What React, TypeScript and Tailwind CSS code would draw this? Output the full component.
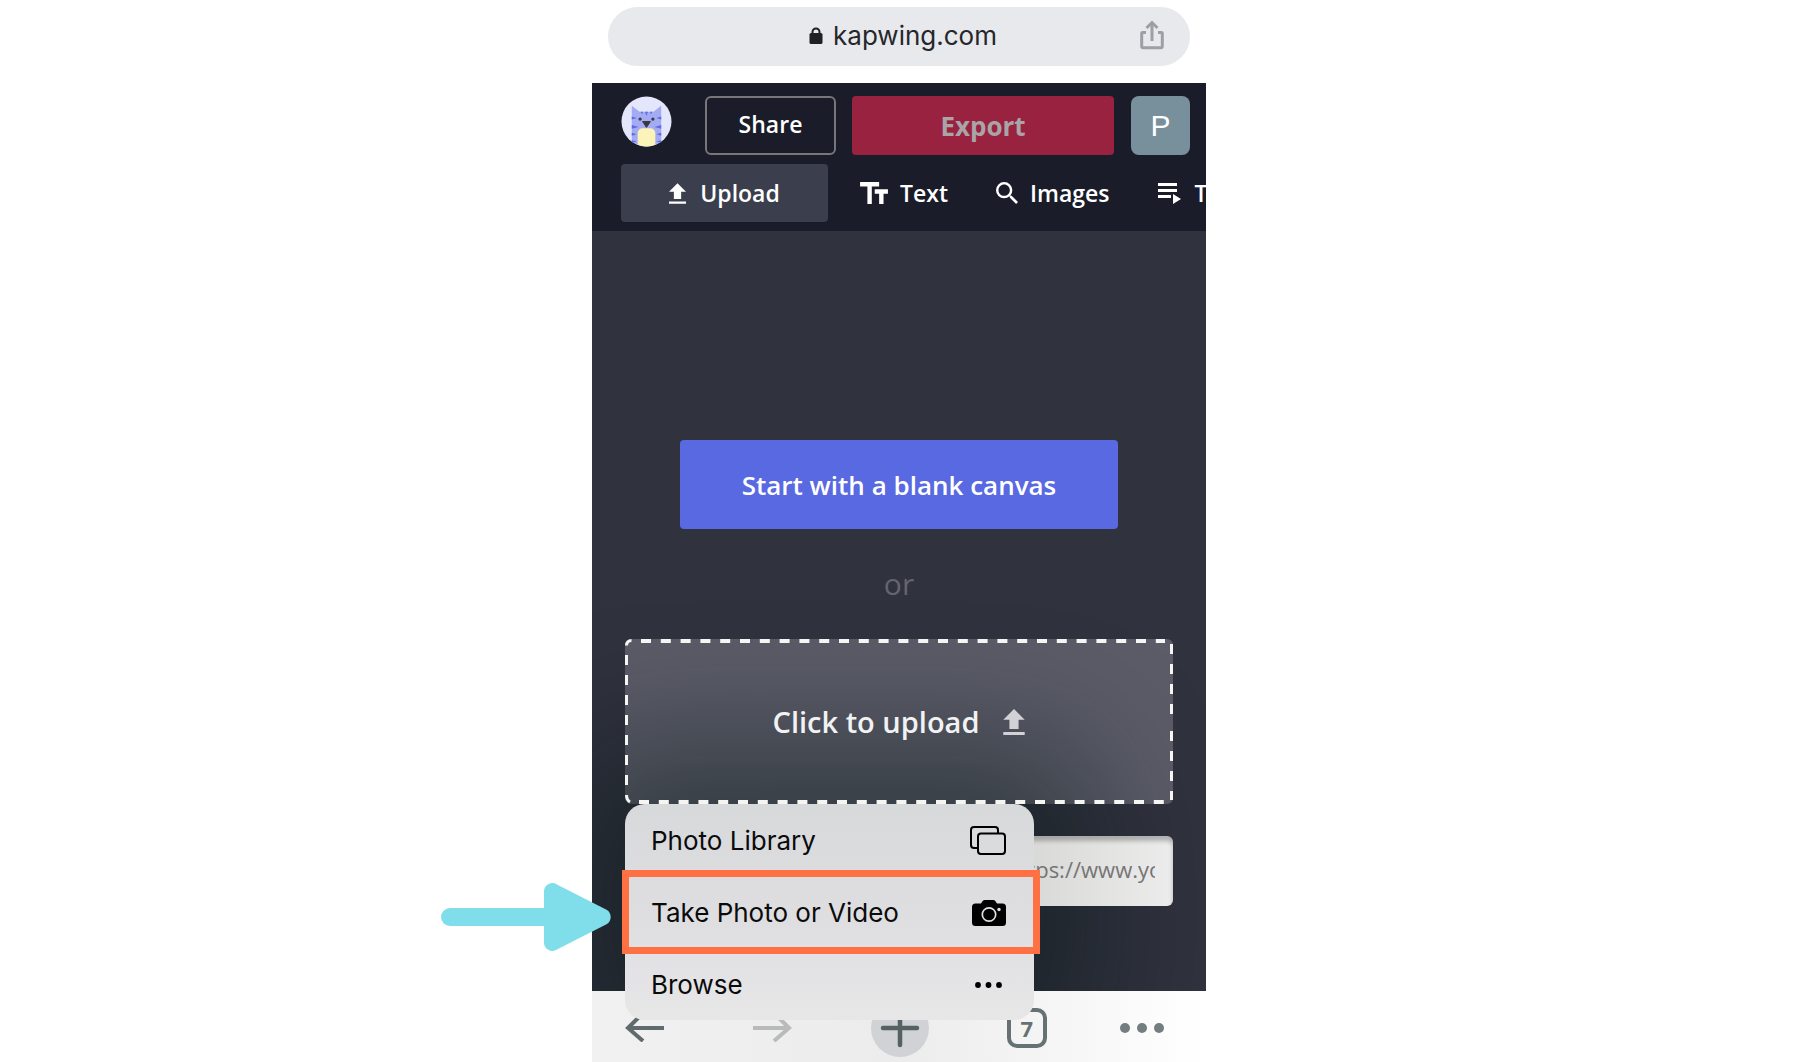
import React from "react";

function LockIcon() {
  return (
    <svg viewBox="0 0 14 18" className="h-[18px] w-3.5" aria-hidden="true">
      <path d="M3.500 8V5a3.500 3.500 0 0 1 7 0v3" fill="none" stroke="#202124" strokeWidth="2" />
      <rect x="0.500" y="6" width="13" height="11" rx="1.600" fill="#202124" />
    </svg>
  );
}

function ShareSheetIcon() {
  return (
    <svg viewBox="0 0 24 30" className="mb-1 h-[30px] w-6" fill="none" stroke="#9aa0a6" strokeWidth="3" aria-hidden="true">
      <path d="M6 12.500H2.500a.8.8 0 0 0-.8.8v13a1.500 1.500 0 0 0 1.500 1.500h17.600a1.500 1.500 0 0 0 1.500-1.500v-13a.8.8 0 0 0-.8-.8H18" />
      <path d="M12 21V3M6.500 8 12 2.500 17.500 8" />
    </svg>
  );
}

function CatAvatar() {
  return (
    <svg viewBox="0 0 52 52" className="size-[51px]" aria-hidden="true">
      <defs>
        <clipPath id="avatar-clip">
          <circle cx="26" cy="26" r="25.500" />
        </clipPath>
      </defs>
      <g clipPath="url(#avatar-clip)">
        <rect width="52" height="52" fill="#e4e6fc" />
        <path d="M11 52V10l8 6h14l8-6v42z" fill="#a3acf2" />
        <path
          d="M11 21l5 1.500-5 1.500zM11 29.500l7 2-7 2zM11 37.500l5 1.500-5 1.500zM11 45l5 1.500-5 1.500zM41 21l-5 1.500 5 1.500zM41 29.500l-7 2 7 2zM41 37.500l-5 1.500 5 1.500zM41 45l-5 1.500 5 1.500zM24.500 16h3L26 20.500zM20 16h2.500l-1 2.500zM29.500 16H32l-1.500 2.500z"
          fill="#5f6ae4"
        />
        <circle cx="19.500" cy="23.500" r="1.700" fill="#3b3b4a" />
        <circle cx="32.500" cy="23.500" r="1.700" fill="#3b3b4a" />
        <path d="M22 26h8l-4 6z" fill="#3b3840" stroke="#3b3840" strokeLinejoin="round" />
        <path d="M17 52V38a5 5 0 0 1 5-5h8a5 5 0 0 1 5 5v14z" fill="#fbf3b8" />
      </g>
    </svg>
  );
}

function UploadIcon({ className }: { className: string }) {
  return (
    <svg viewBox="5 3 14 17" className={className} fill="currentColor" aria-hidden="true">
      <path d="M5 20h14v-2H5zM5 10h4v6h6v-6h4l-7-7z" />
    </svg>
  );
}

function TextSizeIcon() {
  return (
    <svg viewBox="2.500 4 19 15" className="h-[22px] w-7" fill="currentColor" aria-hidden="true">
      <path d="M2.500 4v3h5v12h3V7h5V4zM21.500 9h-9v3h3v7h3v-7h3z" />
    </svg>
  );
}

function SearchIcon() {
  return (
    <svg viewBox="3 3 17.500 17.500" className="size-[22px]" fill="currentColor" aria-hidden="true">
      <path d="M15.500 14h-.79l-.28-.27A6.471 6.471 0 0 0 16 9.500 6.500 6.500 0 1 0 9.500 16c1.610 0 3.090-.59 4.230-1.570l.27.28v.79l5 4.990L20.490 19zm-6 0C7.010 14 5 11.990 5 9.500S7.010 5 9.500 5 14 7.010 14 9.500 11.990 14 9.500 14z" />
    </svg>
  );
}

function TimelineIcon() {
  return (
    <svg viewBox="0 0 23 22" className="h-[22px] w-[23px] shrink-0" fill="currentColor" aria-hidden="true">
      <path d="M0 1h19v3H0zM0 7h19v3H0zM0 13h13v3H0zM15 12l8 5-8 5z" />
    </svg>
  );
}

function LibraryIcon() {
  return (
    <svg viewBox="0 0 36 29" className="h-[29px] w-9" fill="none" stroke="#000" strokeWidth="2" aria-hidden="true">
      <path d="M7.500 22H4a3 3 0 0 1-3-3V4a3 3 0 0 1 3-3h21a3 3 0 0 1 3 3v3.500" />
      <rect x="8" y="7.500" width="27" height="20.500" rx="3" />
    </svg>
  );
}

function CameraIcon() {
  return (
    <svg viewBox="0 0 34 26" className="h-[26px] w-[34px]" aria-hidden="true">
      <path
        d="M3.500 3.500H9l1.500-2.200A3 3 0 0 1 13 0h8a3 3 0 0 1 2.500 1.300L25 3.500h5.500A3.500 3.500 0 0 1 34 7v15.500a3.500 3.500 0 0 1-3.500 3.500h-27A3.500 3.500 0 0 1 0 22.500V7a3.500 3.500 0 0 1 3.500-3.500z"
        fill="#000"
      />
      <circle cx="17" cy="14.500" r="6.700" fill="none" stroke="#e0e0e2" strokeWidth="1.700" />
      <circle cx="27" cy="9.500" r="1.700" fill="#e0e0e2" />
    </svg>
  );
}

function MoreIcon() {
  return (
    <svg viewBox="0 0 27 6" className="mr-1 h-1.5 w-[27px]" fill="#000" aria-hidden="true">
      <circle cx="3" cy="3" r="2.900" />
      <circle cx="13.500" cy="3" r="2.900" />
      <circle cx="24" cy="3" r="2.900" />
    </svg>
  );
}

function DashedOutline() {
  return (
    <svg className="absolute inset-0 z-10 h-full w-full" fill="none" stroke="#f5f5f3" strokeWidth="3" aria-hidden="true">
      <path d="M1.500 6.500C1.500 3.500 3.500 1.500 6.500 1.500" />
      <line x1="16" y1="2" x2="540" y2="2" strokeWidth="4" strokeDasharray="10 9.800" />
      <line x1="14" y1="163" x2="540" y2="163" strokeWidth="4" strokeDasharray="10 9.800" />
      <line x1="1.500" y1="16" x2="1.500" y2="148" strokeDasharray="10 10" />
      <path d="M1.500 156C1.500 160 2.500 161.500 5 163" />
      <svg x="100%" overflow="visible">
        <line x1="-1.500" y1="5" x2="-1.500" y2="75" strokeDasharray="10 10" />
        <line x1="-1.500" y1="92" x2="-1.500" y2="161" strokeDasharray="10 10" />
      </svg>
    </svg>
  );
}

const menuItems = [
  { label: "Photo Library", icon: <LibraryIcon /> },
  { label: "Take Photo or Video", icon: <CameraIcon />, highlighted: true },
  { label: "Browse", icon: <MoreIcon /> },
];

function SourceMenu() {
  return (
    <>
      <div className="absolute top-full left-0 h-[216px] w-[409px] rounded-[20px] shadow-[0_0_130px_60px_rgba(4,20,20,0.45)]" />
      <div
        role="menu"
        className="absolute top-full left-0 z-20 w-[409px] rounded-[20px] bg-linear-to-b from-[#d8d9db] via-[#dedee1] to-[#e7e7e8]"
      >
        {menuItems.map((item) => (
          <button
            key={item.label}
            type="button"
            role="menuitem"
            className="relative flex h-[72px] w-full items-center justify-between pt-px pr-7 pl-[26px] text-left font-[Inter,sans-serif] text-[26px] text-[#0b0b0c]"
          >
            {item.label}
            {item.icon}
            {item.highlighted && (
              <span className="absolute -inset-y-1.5 -right-1.5 -left-[3px] border-[7px] border-[#ff7043]" />
            )}
          </button>
        ))}
      </div>
    </>
  );
}

function AddressBar() {
  return (
    <div className="bg-white px-4 pt-[7px] pb-[17px]">
      <div className="grid h-[59px] grid-cols-[1fr_auto_1fr] items-center rounded-full bg-[#e8e9ed] px-[26px]">
        <span />
        <span className="flex items-center gap-2.5 pb-0.5 pl-2 font-[Inter,sans-serif] text-[26px] text-[#26272a]">
          <LockIcon />
          kapwing.com
        </span>
        <button type="button" aria-label="Share page" className="justify-self-end">
          <ShareSheetIcon />
        </button>
      </div>
    </div>
  );
}

function StudioHeader() {
  return (
    <header className="bg-[#1a1c2a] pt-[13px] pb-[9px] pl-[29px] text-white">
      <div className="flex h-[59px] pr-4">
        <a href="#home" aria-label="Home" className="mr-[33px]">
          <CatAvatar />
        </a>
        <button type="button" className="mr-4 w-[131px] rounded-md border-2 border-[#77777a] pb-0.5 text-[23px] font-semibold">
          Share
        </button>
        <button type="button" className="mr-[17px] flex-1 rounded bg-[#992241] pt-0.5 text-[26px] font-bold text-[#a9a4a8]">
          Export
        </button>
        <button type="button" className="w-[59px] rounded-lg bg-[#78909c] font-['Liberation_Sans',sans-serif] text-3xl">
          P
        </button>
      </div>
      <nav className="mt-[9px] flex h-[58px] overflow-hidden text-[23px] font-semibold whitespace-nowrap">
        <button type="button" className="flex w-[207px] shrink-0 items-center justify-center gap-3.5 rounded bg-[#3b3f4d]">
          <UploadIcon className="h-[21px] w-[17px]" />
          Upload
        </button>
        <button type="button" className="ml-8 flex shrink-0 items-center gap-3">
          <TextSizeIcon />
          Text
        </button>
        <button type="button" className="ml-12 flex shrink-0 items-center gap-3">
          <SearchIcon />
          Images
        </button>
        <button type="button" className="ml-12 flex shrink-0 items-center gap-3.5">
          <TimelineIcon />
          Timeline
        </button>
      </nav>
    </header>
  );
}

function Canvas() {
  return (
    <main className="flex flex-1 flex-col items-center justify-end bg-[#30323e] px-[33px] pt-[209px] pb-[85px]">
      <button type="button" className="h-[89px] w-[438px] rounded bg-[#5869e2] pt-0.5 text-[26px] font-semibold text-white">
        Start with a blank canvas
      </button>
      <p className="my-9 text-[30px] leading-[38px] text-[#63656f]">or</p>
      <div className="relative w-full">
        <button
          type="button"
          className="flex h-[165px] w-full items-center justify-center rounded-md bg-[#5b5c68]"
        >
          <DashedOutline />
          <span className="relative z-10 flex items-center gap-6 text-[29px] font-semibold text-[#f2f2f3]">
            Click to upload
            <UploadIcon className="h-[26px] w-[22px] text-[#d2d2d6]" />
          </span>
        </button>
        <SourceMenu />
      </div>
      <input
        type="text"
        aria-label="Media link"
        placeholder="https://www.youtube.com/"
        className="relative z-10 mt-8 h-[70px] w-[185px] self-end rounded-md bg-linear-to-r from-[#d3d3d0] to-[#ececec] px-[18px] pb-1 text-[22px] text-[#6d6d6d] shadow-[inset_0_5px_4px_rgba(0,0,0,0.25)] placeholder:text-[#757575]"
      />
    </main>
  );
}

function BrowserBar() {
  return (
    <footer className="relative z-10 flex h-[71px] items-center justify-between bg-linear-to-r from-[#f1f1f1] via-[#ececec] to-white pt-0.5 pr-[42px] pl-[33px]">
      <button type="button" aria-label="Back" className="mr-3.5">
        <svg viewBox="0 0 40 28" className="h-7 w-10" fill="none" stroke="#5f6b6d" strokeWidth="4">
          <path d="M39 14H3M15 2 3 14l15 13" />
        </svg>
      </button>
      <button type="button" aria-label="Forward" className="mr-[5px]">
        <svg viewBox="0 0 40 28" className="h-7 w-10" fill="none" stroke="#b9baba" strokeWidth="4">
          <path d="M1 14h36M25 2l12 12-15 13" />
        </svg>
      </button>
      <button type="button" aria-label="New tab" className="mr-[5px]">
        <svg viewBox="0 0 58 58" className="size-[58px]">
          <circle cx="29" cy="29" r="29" fill="#d0d2d5" />
          <path d="M12 29h34M29 12v34" stroke="#566164" strokeWidth="4.500" strokeLinecap="round" />
        </svg>
      </button>
      <button
        type="button"
        aria-label="Open tabs"
        className="size-10 rounded-[10px] border-4 border-[#667173] text-[22px] leading-8 font-bold text-[#667173]"
      >
        7
      </button>
      <button type="button" aria-label="More">
        <svg viewBox="0 0 44 10" className="h-2.5 w-11" fill="#747d80">
          <circle cx="5" cy="5" r="5" />
          <circle cx="22" cy="5" r="5" />
          <circle cx="39" cy="5" r="5" />
        </svg>
      </button>
    </footer>
  );
}

export default function App() {
  return (
    <div className="flex min-h-screen justify-center overflow-hidden bg-white pl-0.5 font-['Open_Sans','Noto_Sans',sans-serif]">
      <div className="relative flex w-full max-w-[614px] flex-col">
        <div className="flex flex-1 flex-col overflow-hidden">
          <AddressBar />
          <StudioHeader />
          <Canvas />
          <BrowserBar />
        </div>
        <svg
          viewBox="0 0 172 68"
          className="absolute bottom-[111px] -left-[151px] z-30 h-[68px] w-[172px]"
          fill="#80deea"
          aria-hidden="true"
        >
          <rect x="0" y="25" width="120" height="18" rx="9" />
          <path d="M103 9a8.500 8.500 0 0 1 13-7.500l50 25.500a8.500 8.500 0 0 1 0 14l-50 25.500A8.500 8.500 0 0 1 103 59z" />
        </svg>
      </div>
    </div>
  );
}
